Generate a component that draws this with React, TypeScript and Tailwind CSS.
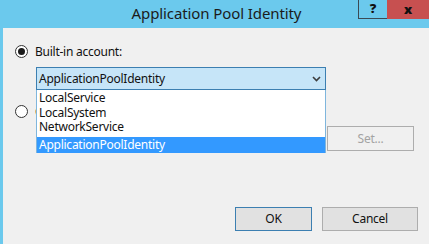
import React from "react";

function Radio({ checked }: { checked?: boolean }) {
  return (
    <div className="w-[13px] h-[13px] rounded-full border border-[#333333] bg-white flex items-center justify-center shrink-0">
      {checked && <div className="w-[7px] h-[7px] rounded-full bg-[#1a1a1a]" />}
    </div>
  );
}

export default function App() {
  const font = { fontFamily: '"Segoe UI", "Noto Sans", "Open Sans", sans-serif' };
  return (
    <div className="w-[429px] h-[244px] bg-[#6bc9ed] flex flex-col overflow-hidden" style={font}>
      {/* Title bar */}
      <div className="h-[28px] relative flex shrink-0">
        <div className="flex-1 flex justify-center pt-[3px] pl-[4px] text-[15px] text-[#1b1b1b] leading-[20px] tracking-[-0.1px]">
          Application Pool Identity
        </div>
        <div className="absolute right-0 top-0 flex h-[19px]">
          <div className="w-[29px] border-l border-b border-[#3b4a55] flex items-center justify-center text-[13px] font-black text-[#111]">?</div>
          <div className="w-[42px] bg-[#c75050] flex items-center justify-center text-[13px] font-black text-[#111]">x</div>
        </div>
      </div>
      {/* Content */}
      <div className="flex-1 ml-[3px] bg-[#f0f0f0] relative text-[12px] tracking-[-0.25px] text-[#111111] pl-[12px] pt-[17px]">
        <div className="flex items-center gap-[7px] h-[13px]">
          <Radio checked />
          <span className="leading-[13px]">Built-in account:</span>
        </div>
        <div className="ml-[21px] mt-[9px] w-[290px] relative">
          <div className="h-[23px] border border-[#3c7fb1] bg-[#c6e5f8] flex items-center pl-[2px] justify-between">
            <span>ApplicationPoolIdentity</span>
            <svg width="9" height="6" viewBox="0 0 9 6" className="mr-[4px]">
              <path d="M1 1 L4.5 4.5 L8 1" stroke="#3d3d3d" strokeWidth="1.6" fill="none" />
            </svg>
          </div>
          <div className="absolute left-0 top-[23px] w-[290px] h-[63px] bg-white border border-[#7fb6dd] border-t-0 z-10 flex flex-col pt-[1px] leading-[14.5px]">
            <div className="px-[2px]">LocalService</div>
            <div className="px-[2px]">LocalSystem</div>
            <div className="px-[2px]">NetworkService</div>
            <div className="px-[2px] bg-[#3399ff] text-white h-[16px] mt-[2px] leading-[16px]">ApplicationPoolIdentity</div>
          </div>
        </div>
        <div className="flex items-center gap-[7px] h-[13px] mt-[15px]">
          <Radio />
          <span className="leading-[13px]">Custom account:</span>
        </div>
        <div className="flex ml-[21px] mt-[8px] gap-[7px]">
          <div className="w-[284px] h-[23px] border border-[#adadad] bg-[#f0f0f0]" />
          <div className="w-[87px] h-[25px] border border-[#adadad] bg-[#f0f0f0] text-[#a3a3a3] flex items-center justify-center">Set...</div>
        </div>
        <div className="flex justify-end gap-[10px] mt-[56px] mr-[11px]">
          <div className="w-[77px] h-[24px] border border-[#3c7fb1] bg-[#e1e1e1] flex items-center justify-center">OK</div>
          <div className="w-[96px] h-[24px] border border-[#adadad] bg-[#e1e1e1] flex items-center justify-center">Cancel</div>
        </div>
      </div>
    </div>
  );
}
